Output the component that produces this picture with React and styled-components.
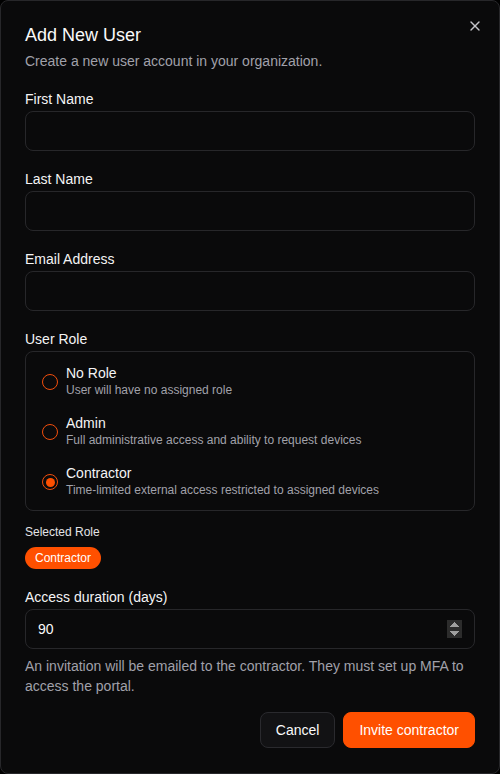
import React, { useState } from 'react';
import styled, { createGlobalStyle } from 'styled-components';
import { X } from 'lucide-react';

const roles = [
    { id: 'none', name: 'No Role', description: 'User will have no assigned role' },
    { id: 'admin', name: 'Admin', description: 'Full administrative access and ability to request devices' },
    { id: 'contractor', name: 'Contractor', description: 'Time-limited external access restricted to assigned devices' },
];

export default function App() {
    const [role, setRole] = useState('contractor');
    const [days, setDays] = useState(90);
    const selected = roles.find(r => r.id === role);

    return (
        <>
            <GlobalStyle />
            <Dialog>
                <CloseButton aria-label="Close">
                    <X size={16} strokeWidth={2} />
                </CloseButton>
                <Header>
                    <Title>Add New User</Title>
                    <Description>Create a new user account in your organization.</Description>
                </Header>

                <Form>
                    <Field>
                        <Label>First Name</Label>
                        <Input type="text" />
                    </Field>
                    <Field>
                        <Label>Last Name</Label>
                        <Input type="text" />
                    </Field>
                    <Field>
                        <Label>Email Address</Label>
                        <Input type="email" />
                    </Field>
                    <Field>
                        <Label>User Role</Label>
                        <RoleBox>
                            {roles.map(r => (
                                <RoleOption key={r.id} onClick={() => setRole(r.id)}>
                                    <Radio $checked={role === r.id} />
                                    <RoleText>
                                        <RoleName>{r.name}</RoleName>
                                        <RoleDescription>{r.description}</RoleDescription>
                                    </RoleText>
                                </RoleOption>
                            ))}
                        </RoleBox>
                    </Field>

                    <SelectedBlock>
                        <SmallLabel>Selected Role</SmallLabel>
                        <Pill>{selected.name}</Pill>
                    </SelectedBlock>

                    <Field>
                        <Label>Access duration (days)</Label>
                        <Input
                            type="number"
                            value={days}
                            onChange={e => setDays(e.target.value)}
                        />
                        <Hint>An invitation will be emailed to the contractor. They must set up MFA to access the portal.</Hint>
                    </Field>
                </Form>

                <Footer>
                    <SecondaryButton>Cancel</SecondaryButton>
                    <PrimaryButton>Invite contractor</PrimaryButton>
                </Footer>
            </Dialog>
        </>
    );
}

const GlobalStyle = createGlobalStyle`
    html, body {
        margin: 0;
        padding: 0;
        background: #000;
        color-scheme: dark;
    }
    * {
        box-sizing: border-box;
    }
    body {
        font-family: "Liberation Sans", Arial, sans-serif;
        color: #fafafa;
    }
`;

const Dialog = styled.div`
    position: relative;
    width: 500px;
    height: 774px;
    padding: 24px 24px 24px;
    background: #0a0a0b;
    border: 1px solid #27272a;
    border-radius: 8px;
    display: flex;
    flex-direction: column;
`;

const CloseButton = styled.button`
    position: absolute;
    top: 17px;
    right: 16px;
    width: 16px;
    height: 16px;
    padding: 0;
    border: none;
    background: none;
    color: #c4c4ca;
    display: flex;
    align-items: center;
    justify-content: center;
    cursor: pointer;
`;

const Header = styled.div`
    display: flex;
    flex-direction: column;
    gap: 6px;
`;

const Title = styled.h2`
    margin: 0;
    font-size: 18px;
    line-height: 20px;
    font-weight: 400;
    color: #fafafa;
`;

const Description = styled.p`
    margin: 0;
    font-size: 14px;
    line-height: 20px;
    color: #a1a1aa;
`;

const Form = styled.div`
    margin-top: 18px;
    display: flex;
    flex-direction: column;
    gap: 18px;
`;

const Field = styled.div`
    display: flex;
    flex-direction: column;
    gap: 2px;
`;

const Label = styled.label`
    font-size: 14px;
    line-height: 20px;
    font-weight: 400;
    color: #f4f4f5;
`;

const Input = styled.input`
    height: 40px;
    width: 100%;
    padding: 0 12px;
    background: transparent;
    border: 1px solid #27272a;
    border-radius: 8px;
    color: #fafafa;
    font-family: inherit;
    font-size: 14px;
    outline: none;

    &::-webkit-inner-spin-button {
        opacity: 1;
        height: 18px;
        width: 15px;
    }
`;

const RoleBox = styled.div`
    border: 1px solid #27272a;
    border-radius: 8px;
    padding: 12px 16px;
    display: flex;
    flex-direction: column;
    gap: 16px;
`;

const RoleOption = styled.div`
    display: flex;
    align-items: center;
    gap: 8px;
    cursor: pointer;
`;

const Radio = styled.span`
    flex: none;
    width: 16px;
    height: 16px;
    margin-top: 2px;
    border-radius: 50%;
    border: 1.5px solid #f24e0c;
    display: flex;
    align-items: center;
    justify-content: center;

    &::after {
        content: '';
        width: 9px;
        height: 9px;
        border-radius: 50%;
        background: #ff5000;
        display: ${p => (p.$checked ? 'block' : 'none')};
    }
`;

const RoleText = styled.div`
    display: flex;
    flex-direction: column;
`;

const RoleName = styled.div`
    font-size: 14px;
    line-height: 18px;
    color: #f4f4f5;
`;

const RoleDescription = styled.div`
    font-size: 12px;
    line-height: 16px;
    color: #a1a1aa;
`;

const SelectedBlock = styled.div`
    margin-top: -5px;
    display: flex;
    flex-direction: column;
    align-items: flex-start;
    gap: 7px;
`;

const SmallLabel = styled.div`
    font-size: 12px;
    line-height: 16px;
    color: #e4e4e7;
`;

const Pill = styled.span`
    height: 22px;
    padding: 0 10px;
    border-radius: 999px;
    background: #ff5000;
    color: #fff;
    font-size: 12px;
    display: inline-flex;
    align-items: center;
`;

const Hint = styled.p`
    margin: 5px 0 0;
    font-size: 14px;
    line-height: 20px;
    color: #a1a1aa;
`;

const Footer = styled.div`
    margin-top: 16px;
    display: flex;
    justify-content: flex-end;
    gap: 8px;
`;

const BaseButton = styled.button`
    height: 36px;
    padding: 0 15px;
    border-radius: 8px;
    font-family: inherit;
    font-size: 14px;
    cursor: pointer;
`;

const SecondaryButton = styled(BaseButton)`
    background: #121214;
    border: 1px solid #2a2a2e;
    color: #fafafa;
`;

const PrimaryButton = styled(BaseButton)`
    background: #ff5000;
    border: 1px solid #ff5000;
    color: #fff;
`;
